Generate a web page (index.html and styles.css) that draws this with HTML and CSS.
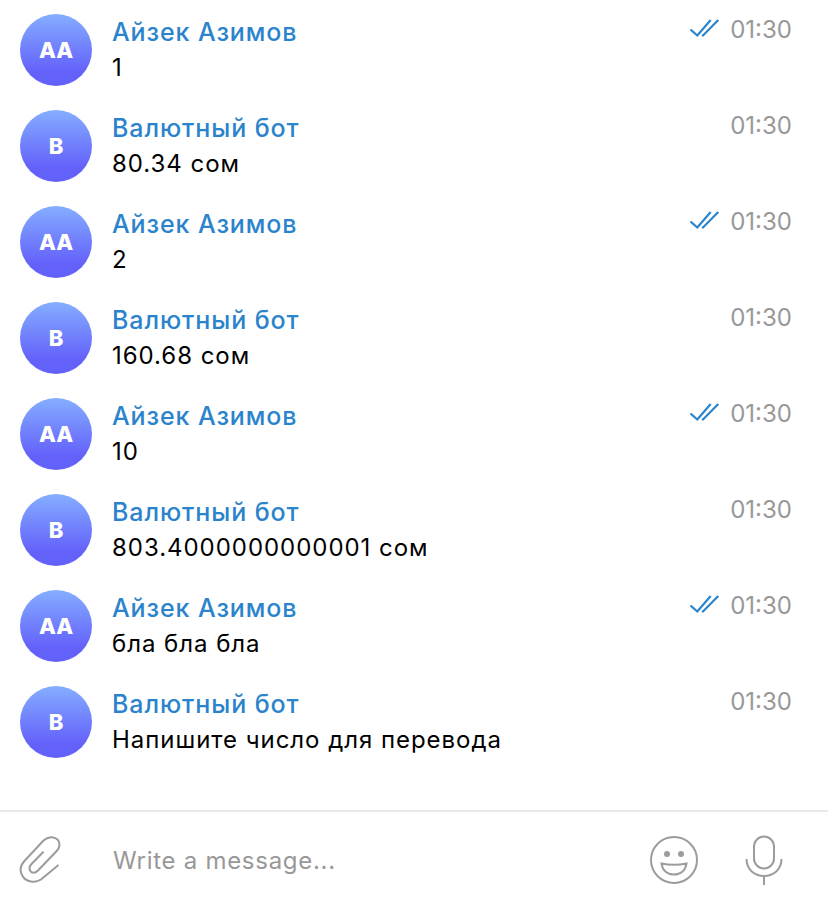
FILE: index.html
```html
<!DOCTYPE html>
<html lang="en">
<head>
    <meta charset="UTF-8">
    <meta name="viewport" content="width=device-width, initial-scale=1.0">
    <title>Chat</title>
    <link rel="stylesheet" href="styles.css">
</head>
<body>
    <div class="chat">
        <div class="messages">
            <div class="message">
                <div class="avatar">AA</div>
                <div class="body">
                    <div class="name">Айзек Азимов</div>
                    <div class="text">1</div>
                </div>
                <div class="meta">
                    <svg class="ticks" viewBox="0 0 30 22"><path d="M0.5 10.5 L7.3 16.5 L20.7 1 M12 16 L13 16.5 L28.3 1"/></svg>
                    <span class="time">01:30</span>
                </div>
            </div>
            <div class="message">
                <div class="avatar">B</div>
                <div class="body">
                    <div class="name">Валютный бот</div>
                    <div class="text">80.34 сом</div>
                </div>
                <div class="meta"><span class="time">01:30</span></div>
            </div>
            <div class="message">
                <div class="avatar">AA</div>
                <div class="body">
                    <div class="name">Айзек Азимов</div>
                    <div class="text">2</div>
                </div>
                <div class="meta">
                    <svg class="ticks" viewBox="0 0 30 22"><path d="M0.5 10.5 L7.3 16.5 L20.7 1 M12 16 L13 16.5 L28.3 1"/></svg>
                    <span class="time">01:30</span>
                </div>
            </div>
            <div class="message">
                <div class="avatar">B</div>
                <div class="body">
                    <div class="name">Валютный бот</div>
                    <div class="text">160.68 сом</div>
                </div>
                <div class="meta"><span class="time">01:30</span></div>
            </div>
            <div class="message">
                <div class="avatar">AA</div>
                <div class="body">
                    <div class="name">Айзек Азимов</div>
                    <div class="text">10</div>
                </div>
                <div class="meta">
                    <svg class="ticks" viewBox="0 0 30 22"><path d="M0.5 10.5 L7.3 16.5 L20.7 1 M12 16 L13 16.5 L28.3 1"/></svg>
                    <span class="time">01:30</span>
                </div>
            </div>
            <div class="message">
                <div class="avatar">B</div>
                <div class="body">
                    <div class="name">Валютный бот</div>
                    <div class="text">803.4000000000001 сом</div>
                </div>
                <div class="meta"><span class="time">01:30</span></div>
            </div>
            <div class="message">
                <div class="avatar">AA</div>
                <div class="body">
                    <div class="name">Айзек Азимов</div>
                    <div class="text">бла бла бла</div>
                </div>
                <div class="meta">
                    <svg class="ticks" viewBox="0 0 30 22"><path d="M0.5 10.5 L7.3 16.5 L20.7 1 M12 16 L13 16.5 L28.3 1"/></svg>
                    <span class="time">01:30</span>
                </div>
            </div>
            <div class="message">
                <div class="avatar">B</div>
                <div class="body">
                    <div class="name">Валютный бот</div>
                    <div class="text">Напишите число для перевода</div>
                </div>
                <div class="meta"><span class="time">01:30</span></div>
            </div>
        </div>

        <div class="composer">
            <svg class="icon-clip" viewBox="0 0 44 52"><path class="line" d="M40.5 31 L23 45.5 C17 49.5 8 48 4.5 42 C1.5 37 2.5 31.5 6 27.5 L25.5 6.5 C30 2.5 36 2 39.5 5.5 C42.5 8.5 42 13.5 38.7 17 L20 36.5 C17 39.5 13.5 39.5 12 36.5 C11 34 11.5 32 13.5 30 L25.5 17.7"/></svg>
            <div class="placeholder">Write a message...</div>
            <svg class="icon-smile" viewBox="0 0 50 50">
                <circle class="line" cx="25" cy="25" r="23"/>
                <circle class="dot" cx="18" cy="19" r="3"/>
                <circle class="dot" cx="32" cy="19" r="3"/>
                <path class="line" d="M12.5 28.5 C20 30 30 30 37.5 28.5 C36.5 35.5 31.5 39.5 25 39.5 C18.5 39.5 13.5 35.5 12.5 28.5 Z"/>
            </svg>
            <svg class="icon-mic" viewBox="0 0 38 50">
                <rect class="line" x="9" y="1.5" width="20" height="32" rx="10"/>
                <path class="line" d="M1.5 24 C1.5 34 9 41 19 41 C29 41 36.5 34 36.5 24 M19 41 L19 50"/>
            </svg>
        </div>
    </div>
</body>
</html>
```

FILE: styles.css
```css
* {
    margin: 0;
    padding: 0;
    box-sizing: border-box;
    font-family: Inter, 'Noto Sans', sans-serif;
}

body {
    background: #ffffff;
}

.chat {
    height: 100vh;
    display: flex;
    flex-direction: column;
}

.messages {
    flex: 1;
    padding-top: 2px;
}

.message {
    height: 96px;
    display: flex;
    align-items: center;
    padding: 0 36px 0 20px;
}

.avatar {
    width: 72px;
    height: 72px;
    border-radius: 50%;
    flex-shrink: 0;
    display: flex;
    align-items: center;
    justify-content: center;
    margin-right: 20px;
    background: linear-gradient(180deg, #85aeff 0%, #6461fb 80%);
    color: #ffffff;
    font-size: 22px;
    font-weight: 800;
}

.body {
    flex: 1;
}

.name {
    color: #2b83cc;
    font-size: 25px;
    font-weight: 500;
    line-height: 36px;
    letter-spacing: 0.9px;
}

.text {
    color: #000000;
    font-size: 24px;
    line-height: 36px;
    letter-spacing: 0.96px;
}

.meta {
    align-self: flex-start;
    display: flex;
    align-items: center;
    gap: 10px;
    margin-top: 10px;
}

.ticks {
    width: 30px;
    height: 22px;
    fill: none;
    stroke: #2b83cc;
    stroke-width: 2.2;
}

.time {
    color: #989898;
    font-size: 24px;
    line-height: 36px;
}

.composer {
    height: 100px;
    flex-shrink: 0;
    display: flex;
    align-items: center;
    border-top: 2px solid #e9e9e9;
    padding: 0 45px 3px 18px;
}

.icon-clip {
    width: 44px;
    height: 52px;
    margin-right: 51px;
}

.placeholder {
    flex: 1;
    margin-top: 2px;
    color: #989898;
    font-size: 24px;
    letter-spacing: 0.72px;
}

.icon-smile {
    width: 50px;
    height: 50px;
    margin-right: 46px;
}

.icon-mic {
    width: 38px;
    height: 50px;
}

.line {
    fill: none;
    stroke: #9c9c9c;
    stroke-width: 2;
}

.dot {
    fill: #9c9c9c;
}
```
